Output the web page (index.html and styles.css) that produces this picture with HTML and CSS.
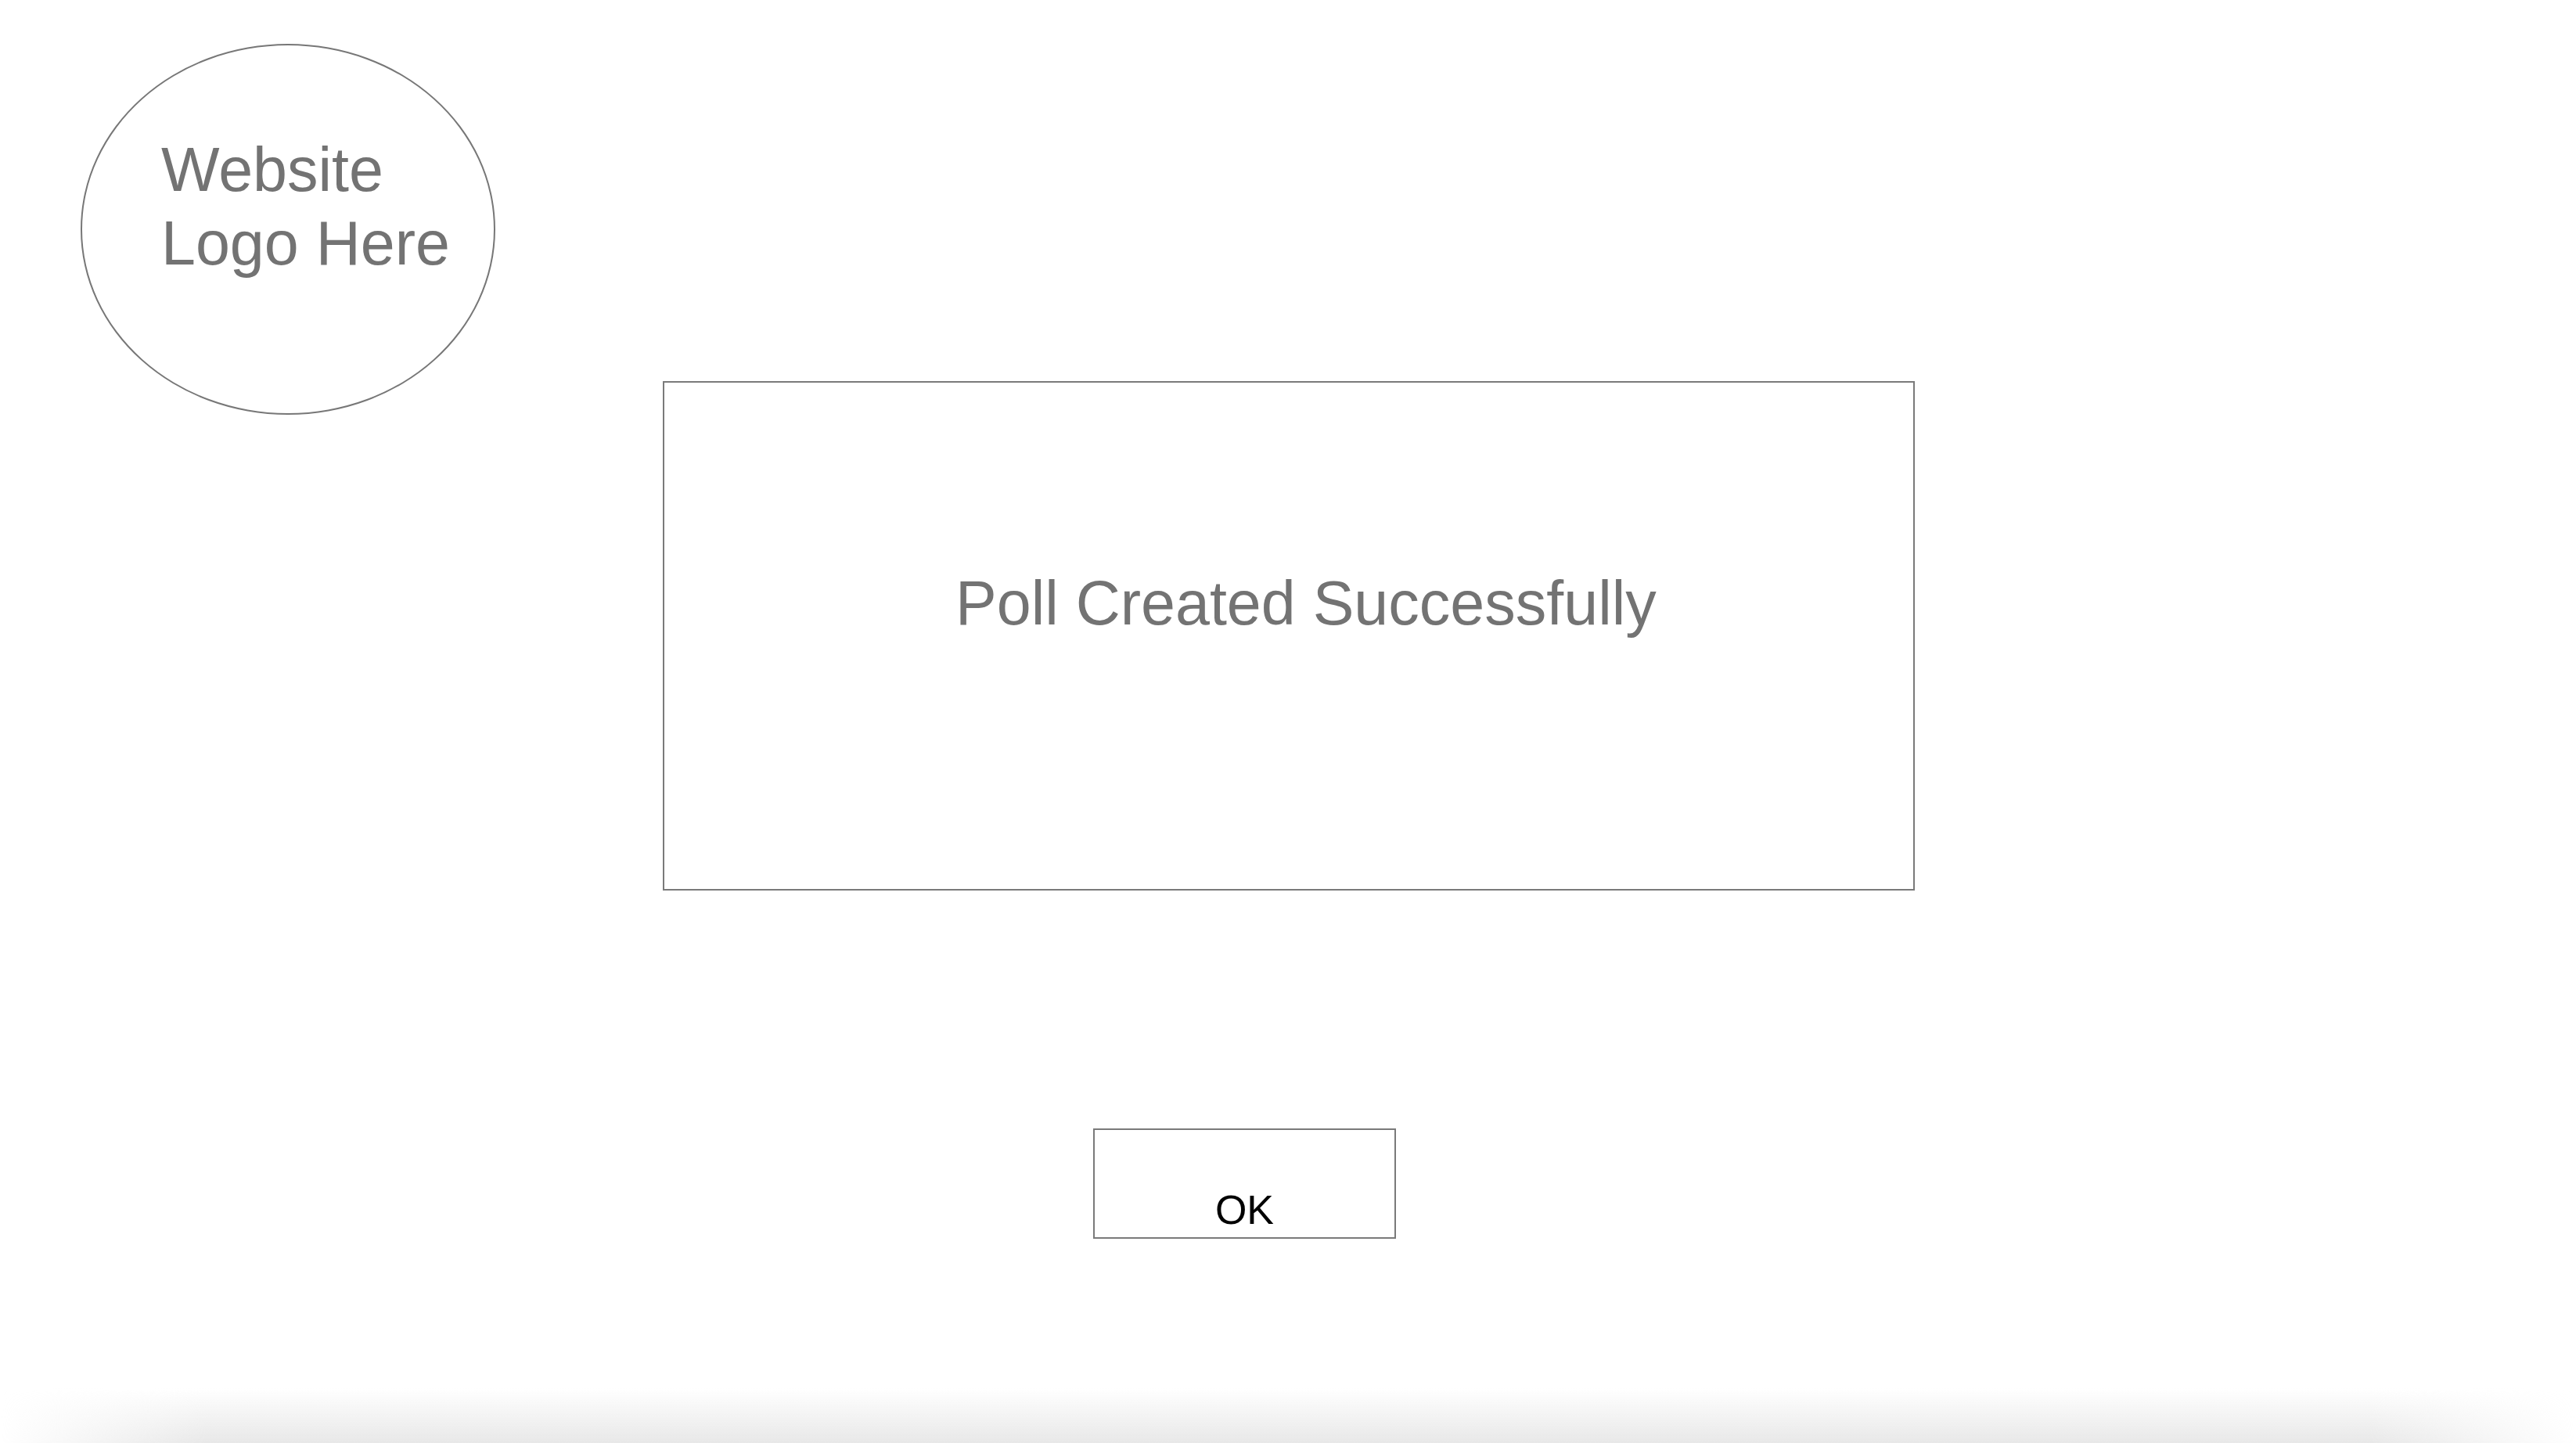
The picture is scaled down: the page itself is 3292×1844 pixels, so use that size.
FILE: index.html
```html
<!DOCTYPE html>
<html lang="en">
<head>
<meta charset="utf-8">
<title>Poll Created</title>
<link rel="stylesheet" href="styles.css">
</head>
<body>
<div class="page">
  <header class="header">
    <div class="logo"><span class="logo-text">Website<br>Logo Here</span></div>
  </header>
  <main class="main">
    <section class="dialog">
      <p class="dialog-text">Poll Created Successfully</p>
    </section>
    <div class="actions">
      <button class="ok-btn" type="button">OK</button>
    </div>
  </main>
  <footer class="footer"></footer>
</div>
</body>
</html>
```
FILE: styles.css
```css
html, body {
  margin: 0;
  padding: 0;
  background: #ffffff;
}
body {
  font-family: "Liberation Sans", Arial, sans-serif;
}
.page {
  height: 100vh;
  display: flex;
  flex-direction: column;
  overflow: hidden;
}
.header {
  padding: 56px 0 0 103px;
}
.logo {
  width: 530px;
  height: 474px;
  box-sizing: border-box;
  border: 2px solid #777777;
  border-radius: 50%;
  padding: 112px 0 0 101px;
}
.logo-text {
  display: block;
  font-size: 79px;
  line-height: 94px;
  color: #737373;
}
.main {
  display: flex;
  flex-direction: column;
}
.dialog {
  margin: -43px 0 0 847px;
  width: 1600px;
  height: 651px;
  box-sizing: border-box;
  border: 2px solid #7a7a7a;
  padding-top: 235px;
  padding-left: 372px;
}
.dialog-text {
  margin: 0;
  font-size: 79px;
  line-height: 94px;
  color: #737373;
  white-space: nowrap;
}
.actions {
  padding: 304px 0 0 1397px;
}
.ok-btn {
  width: 387px;
  height: 141px;
  box-sizing: border-box;
  border: 2px solid #7a7a7a;
  background: #ffffff;
  border-radius: 0;
  padding: 72px 0 0 0;
  font-family: "Liberation Sans", Arial, sans-serif;
  font-size: 52px;
  line-height: 60px;
  color: #000000;
  display: flex;
  justify-content: center;
  align-items: flex-start;
}
.footer {
  margin-top: auto;
  height: 70px;
  background: linear-gradient(to bottom, rgba(232,232,232,0) 0%, rgba(232,232,232,0.5) 50%, #e8e8e8 100%);
  -webkit-mask-image: linear-gradient(to right, transparent 0%, #000 8%, #000 92%, transparent 100%);
  mask-image: linear-gradient(to right, transparent 0%, #000 8%, #000 92%, transparent 100%);
}
```
